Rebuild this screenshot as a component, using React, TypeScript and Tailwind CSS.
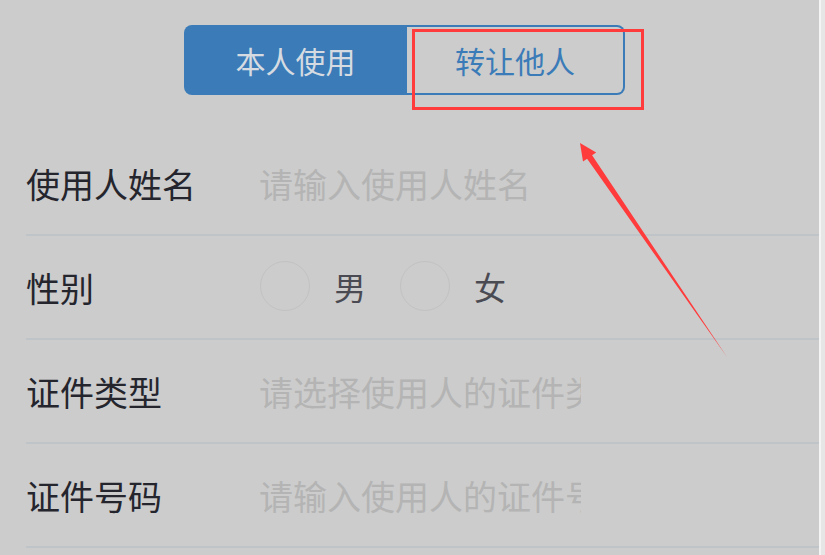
import React, { useState } from 'react';

const FONT = '"Noto Sans CJK SC", "Noto Sans", sans-serif';

const App: React.FC = () => {
  const [mode, setMode] = useState<'self' | 'transfer'>('self');
  const [gender, setGender] = useState<'m' | 'f' | null>(null);

  return (
    <div
      className="relative flex w-[825px] h-[555px] overflow-hidden bg-[#cccccc]"
      style={{ fontFamily: FONT }}
    >
      <div className="flex-1 flex flex-col">
        {/* segmented switch */}
        <div className="flex ml-[184px] mt-[25px] h-[70px]">
          <button
            onClick={() => setMode('self')}
            className="w-[223px] h-full rounded-l-[8px] bg-[#3a7bb8] text-[30px] text-[#d6dbe2] flex items-center justify-center"
          >
            本人使用
          </button>
          <button
            onClick={() => setMode('transfer')}
            className="w-[218px] h-full rounded-r-[8px] border-2 border-l-0 border-[#3a7bb8] text-[30px] text-[#3a7bb8] flex items-center justify-center"
          >
            转让他人
          </button>
        </div>

        {/* form */}
        <div className="ml-[26px] mt-[37px] flex flex-col">
          <div className="flex items-center h-[104px] border-b-2 border-[#bfc4c9]">
            <div className="w-[233px] text-[34px] text-[#25252d]">使用人姓名</div>
            <div className="w-[322px] overflow-hidden whitespace-nowrap text-[34px] text-[#b4b4b4]">请输入使用人姓名</div>
          </div>
          <div className="flex items-center h-[104px] border-b-2 border-[#bfc4c9]">
            <div className="w-[234px] text-[34px] text-[#25252d]">性别</div>
            <div className="flex items-center -mt-[3px]">
              <button
                onClick={() => setGender('m')}
                className="w-[50px] h-[50px] rounded-full border border-[#c2c2c2]"
              />
              <span className="ml-[24px] text-[32px] text-[#4a4a52]">男</span>
              <button
                onClick={() => setGender('f')}
                className="ml-[34px] w-[50px] h-[50px] rounded-full border border-[#c2c2c2]"
              />
              <span className="ml-[24px] text-[32px] text-[#4a4a52]">女</span>
            </div>
          </div>
          <div className="flex items-center h-[104px] border-b-2 border-[#bfc4c9]">
            <div className="w-[233px] text-[34px] text-[#25252d]">证件类型</div>
            <div className="w-[322px] overflow-hidden whitespace-nowrap text-[34px] text-[#b4b4b4]">请选择使用人的证件类型</div>
          </div>
          <div className="flex items-center h-[104px] border-b-2 border-[#bfc4c9]">
            <div className="w-[233px] text-[34px] text-[#25252d]">证件号码</div>
            <div className="w-[322px] overflow-hidden whitespace-nowrap text-[34px] text-[#b4b4b4]">请输入使用人的证件号码</div>
          </div>
        </div>
      </div>

      {/* right scroll strip */}
      <div className="w-[6px] h-full bg-[#e6e6e6] border-l-2 border-[#f4f4f4]" />

      {/* annotation */}
      <div className="absolute left-[412px] top-[29px] w-[232px] h-[81px] border-[3px] border-[#ff3b3b]" />
      <svg className="absolute left-0 top-0" width="825" height="555" viewBox="0 0 825 555">
        <polygon
          points="580,143 596.2,152.5 592.1,155.3 727,357 587.1,158.7 583,161.5"
          fill="#ff3b3b"
        />
      </svg>
      <span className="hidden">{mode}{gender}</span>
    </div>
  );
};

export default App;
